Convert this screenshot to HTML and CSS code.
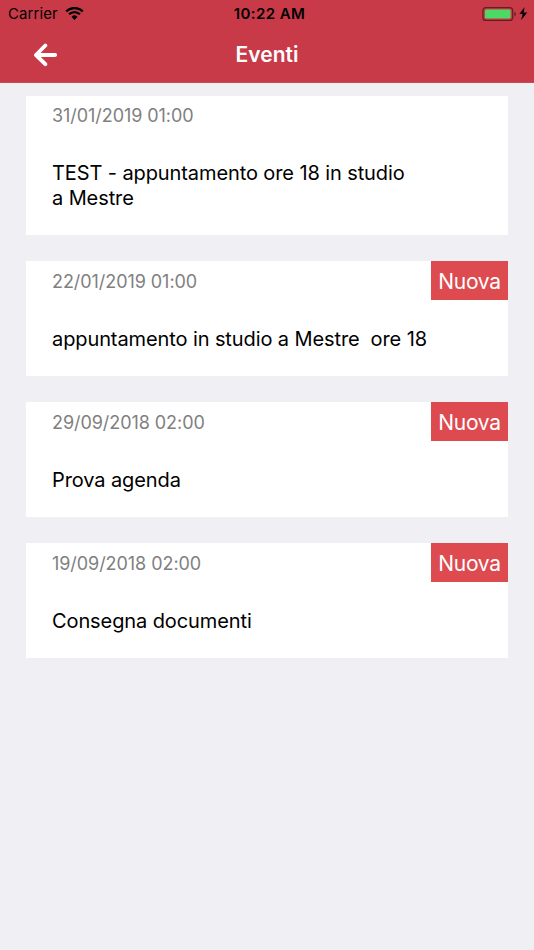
FILE: index.html
```html
<!DOCTYPE html>
<html lang="it">
<head>
    <meta charset="UTF-8">
    <title>Eventi</title>
    <link rel="stylesheet" href="styles.css">
</head>
<body>
<header id="top">
    <div class="status">
        <div class="carrier">
            <span>Carrier</span>
            <svg class="wifi" width="19" height="13" viewBox="0 0 19 13">
                <path d="M1.2 4.4a11.8 11.8 0 0 1 16.6 0M4.1 7.3a7.6 7.6 0 0 1 10.8 0" fill="none" stroke="#000" stroke-width="2.3"/>
                <path d="M9.5 12.9L6.5 9.8a4.3 4.3 0 0 1 6 0z"/>
            </svg>
        </div>
        <span class="clock">10:22 AM</span>
        <svg class="battery" width="46" height="14" viewBox="0 0 46 14">
            <rect x=".9" y=".6" width="29.8" height="12.8" rx="3" fill="none" stroke="#000" stroke-opacity=".5" stroke-width="1.2"/>
            <rect x="3" y="2.4" width="25.6" height="9.2" rx="1.4" fill="#4cd964"/>
            <path d="M32.3 4.8q1.7.8 1.7 2.3t-1.7 2.3z" fill-opacity=".5"/>
            <path d="M42.6 0L37.4 7.1h3.3L39 13.2l6.2-7.6h-3.6z"/>
        </svg>
    </div>
    <div class="nav">
        <svg class="back" width="24" height="24" viewBox="0 0 24 24">
            <path d="M12.3 2.5L3 12L12.3 21.2M3.5 12h18.6" fill="none" stroke="#fff" stroke-width="3.9" stroke-linecap="round" stroke-linejoin="round"/>
        </svg>
        <h1>Eventi</h1>
    </div>
</header>
<ul id="list">
    <li>
        <p class="date">31/01/2019 01:00</p>
        <p class="text">TEST - appuntamento ore 18 in studio<br>a Mestre</p>
    </li>
    <li>
        <p class="date">22/01/2019 01:00</p>
        <p class="text">appuntamento in studio a Mestre&nbsp; ore 18</p>
        <span class="badge">Nuova</span>
    </li>
    <li>
        <p class="date">29/09/2018 02:00</p>
        <p class="text">Prova agenda</p>
        <span class="badge">Nuova</span>
    </li>
    <li>
        <p class="date">19/09/2018 02:00</p>
        <p class="text">Consegna documenti</p>
        <span class="badge">Nuova</span>
    </li>
</ul>
</body>
</html>
```
FILE: styles.css
```css
*{
    margin: 0;
    padding: 0;
    box-sizing: border-box;
}
body{
    min-height: 950px;
    background: #efeff4;
    font-family: Inter, "Liberation Sans", sans-serif;
}
li{
    list-style: none;
}
#top{
    height: 83px;
    background: #c83a48;
    border-bottom: 1px solid #cb4956;
}
.status{
    display: grid;
    grid-template-columns: 1fr auto 1fr;
    align-items: center;
    height: 27px;
    padding: 0 6px 0 8px;
}
.carrier{
    display: flex;
    align-items: center;
    gap: 7px;
    font-size: 15px;
    letter-spacing: 0.1px;
}
.clock{
    font-size: 15px;
    font-weight: 600;
    letter-spacing: 0.4px;
    margin-left: 3px;
}
.battery{
    justify-self: end;
}
.nav{
    display: grid;
    grid-template-columns: 1fr auto 1fr;
    align-items: center;
    height: 55px;
    padding: 0 33px;
}
.nav h1{
    color: #fff;
    font-size: 21px;
    font-weight: 600;
    line-height: 27px;
}
#list{
    padding: 12.7px 26px;
}
#list li{
    position: relative;
    margin-bottom: 26px;
    padding: 7.4px 26px 25.1px;
    background: #fff;
}
.date{
    color: #808080;
    font-size: 18px;
    line-height: 25px;
    letter-spacing: -0.06px;
}
.text{
    margin-top: 33px;
    color: #000;
    font-size: 20px;
    line-height: 24.5px;
    letter-spacing: -0.1px;
}
.badge{
    position: absolute;
    top: 0;
    right: 0;
    width: 77px;
    height: 38.6px;
    background: #dd4b50;
    color: #fff;
    font-size: 21px;
    line-height: 41px;
    letter-spacing: -0.3px;
    text-align: center;
}
```
